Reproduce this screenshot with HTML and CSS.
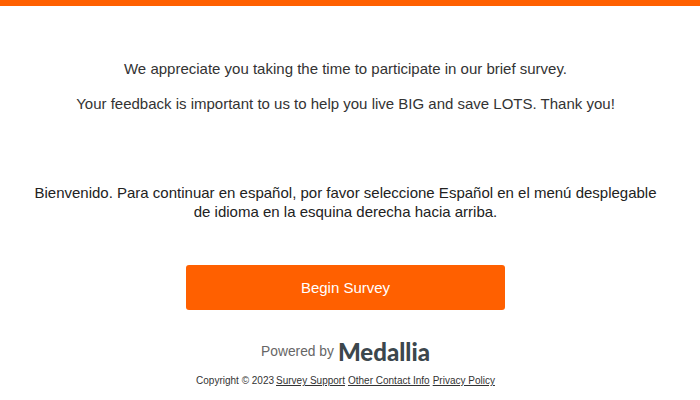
FILE: index.html
```html
<!DOCTYPE html>
<html lang="en">
<head>
    <meta charset="UTF-8">
    <meta name="viewport" content="width=device-width, initial-scale=1.0">
    <title>Survey</title>
    <link rel="stylesheet" href="styles.css">
</head>
<body>
    <div class="top-bar"></div>

    <div class="container">
        <div class="welcome">
            <p>We appreciate you taking the time to participate in our brief survey.</p>
            <p>Your feedback is important to us to help you live BIG and save LOTS. Thank you!</p>
        </div>

        <p class="spanish">Bienvenido. Para continuar en español, por favor seleccione Español en el menú desplegable de idioma en la esquina derecha hacia arriba.</p>

        <button class="begin-btn">Begin Survey</button>

        <div class="powered">
            <span class="powered-by">Powered by</span>
            <span class="logo">Medallia</span>
        </div>

        <div class="footer">
            <span class="copyright">Copyright © 2023</span>
            <a href="#">Survey Support</a>
            <a href="#">Other Contact Info</a>
            <a href="#">Privacy Policy</a>
        </div>
    </div>
</body>
</html>
```

FILE: styles.css
```css
* {
    box-sizing: border-box;
}

body {
    margin: 0;
    font-family: "Liberation Sans", Arial, sans-serif;
    background: #fff;
    color: #333;
}

.top-bar {
    height: 6px;
    background: #ff6000;
}

.container {
    display: flex;
    flex-direction: column;
    align-items: center;
    padding: 54px 39px 0 30px;
}

.welcome p {
    margin: 0 0 17px;
    font-size: 15px;
    line-height: 18px;
    text-align: center;
}

.spanish {
    width: 631px;
    margin: 53px 0 0;
    font-size: 15px;
    line-height: 19px;
    text-align: center;
    color: #222;
}

.begin-btn {
    width: 319px;
    height: 45px;
    margin: 44px 0 0;
    border: 0;
    border-radius: 3px;
    background: #ff6000;
    color: #fff;
    font-family: inherit;
    font-size: 15px;
}

.powered {
    display: flex;
    align-items: center;
    gap: 4px;
    height: 28px;
    margin-top: 27px;
}

.powered-by {
    font-size: 13.8px;
    color: #666;
}

.logo {
    font-family: "Lato", sans-serif;
    font-size: 24px;
    font-weight: 900;
    color: #3c474d;
}

.footer {
    display: flex;
    gap: 3px;
    margin-top: 10px;
    font-size: 10px;
    line-height: 12px;
    color: #333;
}

.footer a {
    color: #333;
}

.copyright {
    margin-right: -1px;
}
```
